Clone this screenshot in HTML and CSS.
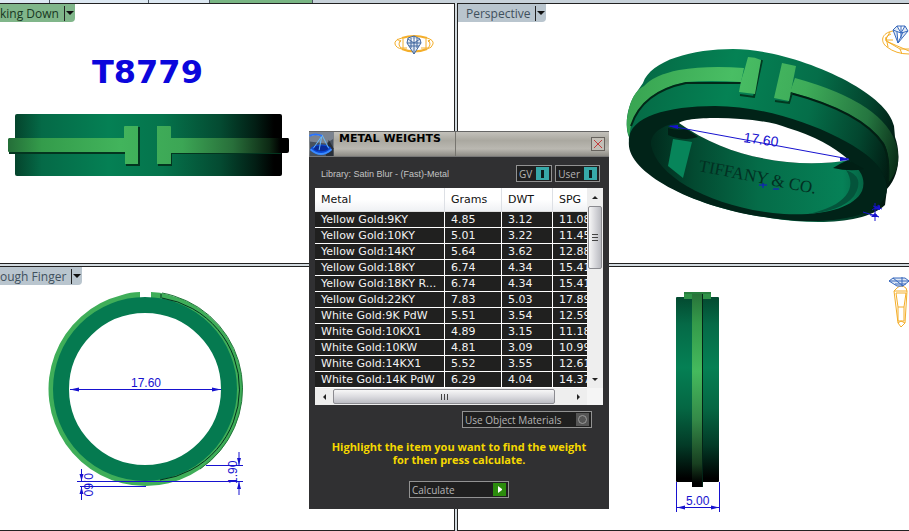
FILE: index.html
```html
<!DOCTYPE html>
<html lang="en">
<head>
<meta charset="utf-8">
<title>Metal Weights</title>
<link rel="stylesheet" href="styles.css">
</head>
<body>
<div class="app">
  <div class="strip"><span class="tab tab-a"></span><span class="tab tab-b"></span><span class="tab tab-c"></span><span class="tab tab-on"></span><span class="tab tab-d"></span></div>
  <main class="views">
    <section class="view view-left">
      <svg class="drawing" viewBox="0 4 454 259" preserveAspectRatio="xMinYMin meet">
        <defs>
          <linearGradient id="body" x1="0" x2="1" y1="0" y2="0"><stop offset="0" stop-color="#04442c"/><stop offset=".1" stop-color="#056a47"/><stop offset=".35" stop-color="#058054"/><stop offset=".55" stop-color="#05744c"/><stop offset=".77" stop-color="#044a31"/><stop offset=".9" stop-color="#021e14"/><stop offset=".97" stop-color="#000"/></linearGradient>
          <linearGradient id="band" gradientUnits="userSpaceOnUse" x1="8" x2="289" y1="0" y2="0"><stop offset="0" stop-color="#246e38"/><stop offset=".12" stop-color="#349c4b"/><stop offset=".4" stop-color="#42b45c"/><stop offset=".62" stop-color="#3ca655"/><stop offset=".8" stop-color="#286f3a"/><stop offset=".93" stop-color="#0d2914"/><stop offset=".97" stop-color="#000"/></linearGradient>
        </defs>
        <text class="model-name" x="92" y="83">T8779</text>
        <rect x="15" y="114" width="267" height="62" rx="2" fill="url(#body)"/>
        <path d="M9 153H125M172 153H281M126 165H139V127M158 165H171V153" fill="none" stroke="#03351f" stroke-width="2"/>
        <path d="M9 138H124V127Q124 126 125 126H138V164H125V152H9Q8 152 8 151V139ZM157 126H170Q171 126 171 127V138H288Q289 138 289 140V151Q289 153 287 153H171V164H157Z" fill="url(#band)"/>
        <g fill="none" stroke="#f4ae2a"><path d="M402 38Q414 34 427 38M402 49Q414 54 427 49" stroke-width="2"/><path d="M402 38Q394 40 395 44T402 49M427 38Q434 40 433 44T427 49M401 40Q397 44 401 48H407M428 40Q432 44 428 48H421M403 39V48M426 39V48M397 39L401 42M431 39L428 42"/></g>
        <path d="M408 38L414 36L420 39L421 43L414 54L407 43ZM407 43H421M411 38V48M417 38V48M408 39L414 43L420 39M414 36V54M409 46H419" fill="#dfe8f3" stroke="#43699f"/>
      </svg>
      <button class="view-title view-title-on"><span>king Down</span><i class="caret"></i></button>
    </section>
    <section class="view view-right">
      <svg class="drawing" viewBox="458 4 451 259" preserveAspectRatio="xMinYMin meet">
        <defs>
          <linearGradient id="shell" gradientUnits="userSpaceOnUse" x1="628" y1="90" x2="899" y2="155"><stop offset="0" stop-color="#056844"/><stop offset=".35" stop-color="#058254"/><stop offset=".65" stop-color="#056e49"/><stop offset=".85" stop-color="#03452e"/><stop offset="1" stop-color="#01150e"/></linearGradient>
          <linearGradient id="inlay" gradientUnits="userSpaceOnUse" x1="628" y1="90" x2="899" y2="155"><stop offset="0" stop-color="#38a451"/><stop offset=".35" stop-color="#49be64"/><stop offset=".62" stop-color="#3eac59"/><stop offset=".86" stop-color="#257640"/><stop offset="1" stop-color="#0a2e18"/></linearGradient>
          <linearGradient id="inner" gradientUnits="userSpaceOnUse" x1="652" y1="0" x2="864" y2="0"><stop offset="0" stop-color="#012b1d"/><stop offset=".2" stop-color="#034a31"/><stop offset=".5" stop-color="#056c48"/><stop offset=".9" stop-color="#068157"/><stop offset="1" stop-color="#056444"/></linearGradient>
        </defs>
        <path d="M643 83C651 60 693 49 733 49C792 49 887 90 894 126L895 137C900 150 901 174 887 189L885 205C865 224 815 225 770 218C690 207 625 171 629 137C625 128 626 110 634 96Z" fill="url(#shell)"/>
        <path d="M629 141C628 117 667 106 715 106C785 106 866 145 880 169Q887 180 887 189C886 216 831 227 770 218C690 207 625 171 629 141Z" fill="#012318"/>
        <path d="M644 86Q632 92 628 113Q625 125 629 137L631 125Q642 91 686 82Q710 80 741 82L744 68Q708 65 679 70Q654 75 644 86Z" fill="url(#inlay)"/>
        <path d="M631 126Q642 92 686 83L741 83" fill="none" stroke="#022818" stroke-width="2"/>
        <path d="M790 92Q862 111 884 143Q891 156 888 183Q902 168 897 147Q886 103 795 78Z" fill="url(#inlay)"/>
        <path d="M790 93Q862 112 883 144Q890 157 888 183" fill="none" stroke="#021f13" stroke-width="2"/>
        <path d="M740 95L754 97L762 60M775 101L789 103L792 93" fill="none" stroke="#023820" stroke-width="2"/>
        <path d="M748 57Q755 57 761 60L755 94L739 92L741 81L745 68ZM782 63L796 66L789 101L774 98Z" fill="url(#inlay)"/>
        <path d="M651 145C650 132 665 124 679 123C730 160 800 169 848 160C862 170 866 180 862 191C854 208 823 216 784 214C715 209 657 178 651 145Z" fill="url(#inner)"/>
        <path d="M673 139L692 142L683 178L668 166Z" fill="#07855a"/>
        <path d="M679 123C685 116 756 115 788 128Q825 139 849 160C800 169 730 160 679 123Z" fill="#fff"/>
        <path d="M668 128Q677 131 686 129L698 137Q684 142 668 135ZM848 160Q839 164 833 168Q850 172 864 169Z" fill="#011f15"/>
        <path d="M846 170Q866 177 854 196Q842 211 808 214C846 206 858 188 846 170Z" fill="#04543b"/>
        <text class="engraving" transform="translate(698 171) rotate(11)">TIFFANY &amp; CO.</text>
        <path d="M759 185h8M763 183v5M773 189h6" stroke="#1712cf"/>
        <path d="M670 126L849 159" stroke="#1712cf" fill="none"/><path d="M668 126l10-1v4zM850 160l-10-3v4z" fill="#1712cf"/>
        <text class="measure measure-wide" transform="translate(743 142) rotate(8)">17.60</text>
        <path d="M863 212L879 217M873 206L882 209M875 203V221M870 215H877M872 210L879 205" stroke="#1712cf" fill="none"/><path d="M871 217h8l-4-4zM874 209l6-4v5z" fill="#1712cf"/>
        <g fill="none" stroke="#f4ae2a"><path d="M893 31C881 33 880 42 887 47Q896 54 909 54M891 34Q884 37 886 41Q895 45 909 51M888 42L900 49H909M886 37L888 47M890 32L886 39M900 49L902 54M886 40H893"/></g>
        <path d="M893 30L897 26H905L908 31L898 43ZM893 30L901 33L908 31M897 26L901 33L905 26M897 32L898 43L903 32M901 26V38" fill="#dfe8f3" stroke="#3869bd"/>
      </svg>
      <button class="view-title"><span>Perspective</span><i class="caret"></i></button>
    </section>
    <section class="view view-left">
      <svg class="drawing" viewBox="0 267 454 263" preserveAspectRatio="xMinYMin meet">
        <path d="M140 292Q130 292 122 295A97 97 0 1 0 169 295Q160 292 151 292V300H140Z" fill="#3fae59"/>
        <path d="M162 293Q168 294 174 296A97 97 0 0 1 200 469" fill="none" stroke="#22763a"/>
        <circle cx="145" cy="389" r="84" fill="#fff" stroke="#057a50" stroke-width="16"/>
        <path d="M162 298A92 92 0 0 1 160 480" fill="none" stroke="#03321f"/>
        <path d="M161 294V298" stroke="#03321f" stroke-width="1"/>
        <g stroke="#1712cf" fill="none"><path d="M70 389.500H221M206 465.500H243M77 481.500H243M80 486.500H146M239 452V465M239 482V495M81.500 469V481M81.500 487V500"/></g>
        <path d="M70 389.500l9-2v4zM221 389.500l-9-2v4zM239 465l-2-7h4zM239 482l-2 7h4zM81.500 481l-2-7h4zM81.500 487l-2 7h4z" fill="#1712cf"/>
        <text class="measure" x="131" y="387">17.60</text>
        <text class="measure" transform="translate(237 484) rotate(-90)">1.90</text>
        <text class="measure" transform="translate(84 473) rotate(90)">0.60</text>
      </svg>
      <button class="view-title"><span>ough Finger</span><i class="caret"></i></button>
    </section>
    <section class="view view-right">
      <svg class="drawing" viewBox="458 267 451 263" preserveAspectRatio="xMinYMin meet">
        <defs>
          <linearGradient id="side" x1="0" x2="0" y1="0" y2="1"><stop offset="0" stop-color="#034a30"/><stop offset=".15" stop-color="#056a47"/><stop offset=".38" stop-color="#058054"/><stop offset=".6" stop-color="#056743"/><stop offset=".8" stop-color="#033b27"/><stop offset=".98" stop-color="#000"/></linearGradient>
          <linearGradient id="spine" x1="0" x2="0" y1="0" y2="1"><stop offset="0" stop-color="#28733a"/><stop offset=".15" stop-color="#349a4a"/><stop offset=".4" stop-color="#45ba5d"/><stop offset=".65" stop-color="#348a48"/><stop offset=".88" stop-color="#183f20"/><stop offset=".98" stop-color="#000"/></linearGradient>
        </defs>
        <rect x="676" y="297" width="43" height="185" rx="1" fill="url(#side)"/>
        <path d="M684 292H711V299H684Z" fill="#2f9248"/><path d="M684 293H711" stroke="#216b35"/>
        <rect x="692" y="294" width="11" height="193" fill="url(#spine)"/><path d="M702.500 294V487" stroke="#032417"/>
        <path d="M676.500 482V512M719.500 482V512M677 507.500H719" fill="none" stroke="#1712cf"/><path d="M677 507.500l8-2v4zM719 507.500l-8-2v4z" fill="#1712cf"/>
        <text class="measure" x="686" y="505">5.00</text>
        <path d="M897 288Q901 284 906 288L907 291L905 323L901 327L898 323L894 291ZM894 291H907M896 293H906L904 307H898ZM898 307V321H904V307M898 323L901 321L905 323" fill="none" stroke="#f4ae2a"/>
        <path d="M889 281L893 278H905L909 281L903 286H897ZM889 281H909M893 278L903 286M902 277V286M895 284H906" fill="#dfe8f3" stroke="#3869bd"/>
      </svg>
    </section>
  </main>

  <section class="dialog" aria-label="Metal Weights">
    <header class="titlebar">
      <svg class="logo" viewBox="0 0 25 25"><rect width="25" height="25" fill="#47515e"/><path d="M0 0H25V7L17 12L0 10Z" fill="#7b8390"/><path d="M20 8L25 17V25H17Z" fill="#292f38"/><ellipse cx="12" cy="18" rx="11" ry="5" fill="#0b48d5"/><ellipse cx="12" cy="17" rx="8" ry="3" fill="#0a2b96"/><path d="M1 18Q12 28 23 18" fill="none" stroke="#3b8cff" stroke-width="2"/><path d="M0 4Q6 1 13 4L4 17M13 3L10 19M13 3L20 17" fill="none" stroke="#69bcff" stroke-width="1"/><path d="M0 4Q6 1 13 4" fill="none" stroke="#2a73ff" stroke-width="2"/></svg>
      <h1>METAL WEIGHTS</h1>
      <button class="close" aria-label="Close"><svg viewBox="0 0 10 10"><path d="M1 1L9 9M9 1L1 9" stroke="#c33b3b" fill="none"/></svg></button>
    </header>
    <div class="library-row">
      <p>Library: Satin Blur - (Fast)-Metal</p>
      <div class="switches">
        <label class="switch"><span>GV</span><input type="checkbox" checked></label>
        <label class="switch"><span>User</span><input type="checkbox" checked></label>
      </div>
    </div>
    <div class="list">
      <div class="table-clip">
        <table>
          <thead><tr><th class="c-metal">Metal</th><th class="c-grams">Grams</th><th class="c-dwt">DWT</th><th class="c-spg">SPG</th></tr></thead>
          <tbody>
            <tr><td>Yellow Gold:9KY</td><td>4.85</td><td>3.12</td><td>11.08</td></tr>
            <tr><td>Yellow Gold:10KY</td><td>5.01</td><td>3.22</td><td>11.45</td></tr>
            <tr><td>Yellow Gold:14KY</td><td>5.64</td><td>3.62</td><td>12.88</td></tr>
            <tr><td>Yellow Gold:18KY</td><td>6.74</td><td>4.34</td><td>15.41</td></tr>
            <tr><td>Yellow Gold:18KY R...</td><td>6.74</td><td>4.34</td><td>15.41</td></tr>
            <tr><td>Yellow Gold:22KY</td><td>7.83</td><td>5.03</td><td>17.89</td></tr>
            <tr><td>White Gold:9K PdW</td><td>5.51</td><td>3.54</td><td>12.59</td></tr>
            <tr><td>White Gold:10KX1</td><td>4.89</td><td>3.15</td><td>11.18</td></tr>
            <tr><td>White Gold:10KW</td><td>4.81</td><td>3.09</td><td>10.99</td></tr>
            <tr><td>White Gold:14KX1</td><td>5.52</td><td>3.55</td><td>12.61</td></tr>
            <tr><td>White Gold:14K PdW</td><td>6.29</td><td>4.04</td><td>14.37</td></tr>
          </tbody>
        </table>
      </div>
      <div class="vbar"><i class="arrow up"></i><div class="vthumb"><i></i><i></i><i></i></div><i class="arrow down"></i></div>
      <div class="hbar"><i class="arrow left"></i><div class="hthumb"><i></i><i></i><i></i></div><i class="arrow right"></i></div>
      <div class="corner"></div>
    </div>
    <label class="switch materials"><span>Use Object Materials</span><input type="checkbox"></label>
    <p class="hint">Highlight the item you want to find the weight<br>for then press calculate.</p>
    <button class="calculate"><span>Calculate</span><svg viewBox="0 0 13 13"><rect width="13" height="13" fill="#2c8c0d"/><path d="M5 3V10L9 7V6Z" fill="#fff"/></svg></button>
  </section>
</div>
</body>
</html>
```
FILE: styles.css
```css
* { box-sizing: border-box; }
body { margin: 0; background: #d3dbe0; font-family: "DejaVu Sans", sans-serif; }
h1, p { margin: 0; font-weight: normal; }
button { margin: 0; padding: 0; border: 0; font: inherit; }

.app { position: relative; display: flex; flex-direction: column; height: 100vh; overflow: hidden; }
.strip { flex: 0 0 3px; display: flex; background: #c8d2da; }
.tab { border-right: 1px solid #4a5560; background: #dce8f2; }
.tab-a { flex: 49; }
.tab-b { flex: 99; }
.tab-c { flex: 60; }
.tab-on { flex: 102; background: #79b583; }
.tab-d { flex: 599; background: #c8d2da; border: 0; }

.views { flex: 1; min-height: 0; display: grid; grid-template: 261fr 265fr / 455fr 452fr; gap: 2px; }
.view { position: relative; overflow: hidden; min-height: 0; background: #fff; border: 1px solid #222; }
.view-left { border-left: 0; }
.view-right { border-right: 0; }
.drawing { position: absolute; top: 0; left: 0; width: 100%; }
.view-title { position: relative; display: flex; align-items: center; height: 18px; gap: 5px; background: #b9c5ce; color: #3f505d; font: 12px "Open Sans", sans-serif; border-radius: 0 0 4px 0; }
.view-right .view-title { padding-left: 8px; }
.view-title-on { background: #80b68a; color: #17371f; }
.caret { display: flex; align-items: center; height: 15px; padding: 0 1px; border-left: 1px solid #222; }
.caret::after { content: ""; border: 4px solid transparent; border-top-color: #111; border-bottom: 0; }

.model-name { font: bold 32px "DejaVu Sans", sans-serif; fill: #0b06dc; }
.measure { font: 12px "Liberation Sans", sans-serif; fill: #1712cf; }
.measure-wide { font-size: 14px; }
.engraving { font: 17px "Liberation Serif", serif; fill: #023022; }

.dialog { position: absolute; top: 131px; left: 309px; width: 300px; padding-bottom: 11px; background: #303032; color: #c4c4c4; display: flex; flex-direction: column; }
.titlebar { display: flex; align-items: center; height: 26px; padding-right: 4px; background: linear-gradient(#c3c1bb, #aaa8a0 35%, #bab8b1 70%, #8d8b85); border-top: 1px solid #666; border-bottom: 1px solid #777; color: #000; }
.logo { width: 25px; height: 24px; }
.titlebar h1 { align-self: stretch; width: 122px; padding-left: 5px; border-right: 1px solid #77756f; font: bold 11px/13px "DejaVu Sans", sans-serif; white-space: nowrap; }
.close { display: grid; place-items: center; width: 14px; height: 14px; margin-left: auto; background: #c3bfb7; border: 1px solid #67635e; }
.close svg { width: 10px; height: 10px; }

.library-row { display: flex; align-items: center; justify-content: space-between; height: 31px; padding: 2px 9px 0 12px; font: 9px "Liberation Sans", sans-serif; }
.switches { display: flex; gap: 3px; }
.switch, .calculate { display: flex; align-items: center; justify-content: space-between; height: 17px; padding: 1px 2px; gap: 4px; background: #1f1f1f; border: 1px solid #929292; color: #b5b5b5; font: 10px "Open Sans", sans-serif; }
.switch input { appearance: none; display: grid; place-items: center; width: 13px; height: 13px; margin: 0; background: #555; }
.switch input::before { content: ""; width: 7px; height: 7px; border: 1px solid #999; border-radius: 50%; }
.switch input:checked { background: #37a8a8; }
.switch input:checked::before { width: 3px; height: 8px; background: #0c1c1c; border: 0; border-radius: 0; }

.list { display: grid; grid-template-columns: 1fr 16px; grid-template-rows: 200px 17px; margin: 0 6px; background: #fff; }
.table-clip { overflow: hidden; }
table { width: 292px; border-collapse: separate; border-spacing: 0; table-layout: fixed; color: #f3f3f3; font-size: 11px; }
th { height: 24px; padding: 0 6px; background: linear-gradient(#fff 50%, #eff1f4); border-right: 1px solid #dde0e5; border-bottom: 1px solid #ddd; color: #111; text-align: left; font-weight: normal; }
td { height: 16px; padding: 1px 0 0 6px; line-height: 14px; background: #20201f; border-right: 1px solid #fff; border-bottom: 1px solid #fff; white-space: nowrap; overflow: hidden; }
.c-metal { width: 130px; }
.c-grams { width: 57px; }
.c-dwt { width: 51px; }

.vbar { display: flex; flex-direction: column; align-items: center; background: #eee; }
.hbar { display: flex; align-items: center; background: #eee; padding: 1px 0; }
.corner { background: #f5f5f5; }
.arrow { flex: 0 0 18px; display: grid; place-items: center; }
.arrow::after { content: ""; border: 3px solid transparent; }
.up::after { border-bottom-color: #222; border-top: 0; }
.down { margin-top: auto; }
.down::after { border-top-color: #222; border-bottom: 0; }
.left::after { border-right-color: #222; border-left: 0; }
.right { margin-left: auto; }
.right::after { border-left-color: #222; border-right: 0; }
.vthumb { flex: 0 0 63px; width: 14px; display: flex; flex-direction: column; align-items: center; justify-content: center; gap: 2px; background: linear-gradient(90deg, #f7f7f7, #d8d8dc 50%, #b9bac0); border: 1px solid #8b8b90; border-radius: 2px; }
.vthumb i { width: 6px; height: 1px; background: #444; }
.hthumb { flex: 0 0 222px; height: 15px; display: flex; align-items: center; justify-content: center; gap: 2px; background: linear-gradient(#f7f7f7, #dcdce0 50%, #bcbdc4); border: 1px solid #8b8b90; border-radius: 2px; }
.hthumb i { width: 1px; height: 6px; background: #444; }

.materials { align-self: flex-end; width: 130px; margin: 6px 17px 0 0; }
.hint { margin-top: 12px; text-align: center; color: #f5d800; font: bold 11px/13px "Open Sans", sans-serif; }
.calculate { align-self: center; width: 100px; margin-top: 15px; }
.calculate svg { width: 13px; height: 13px; }
```
